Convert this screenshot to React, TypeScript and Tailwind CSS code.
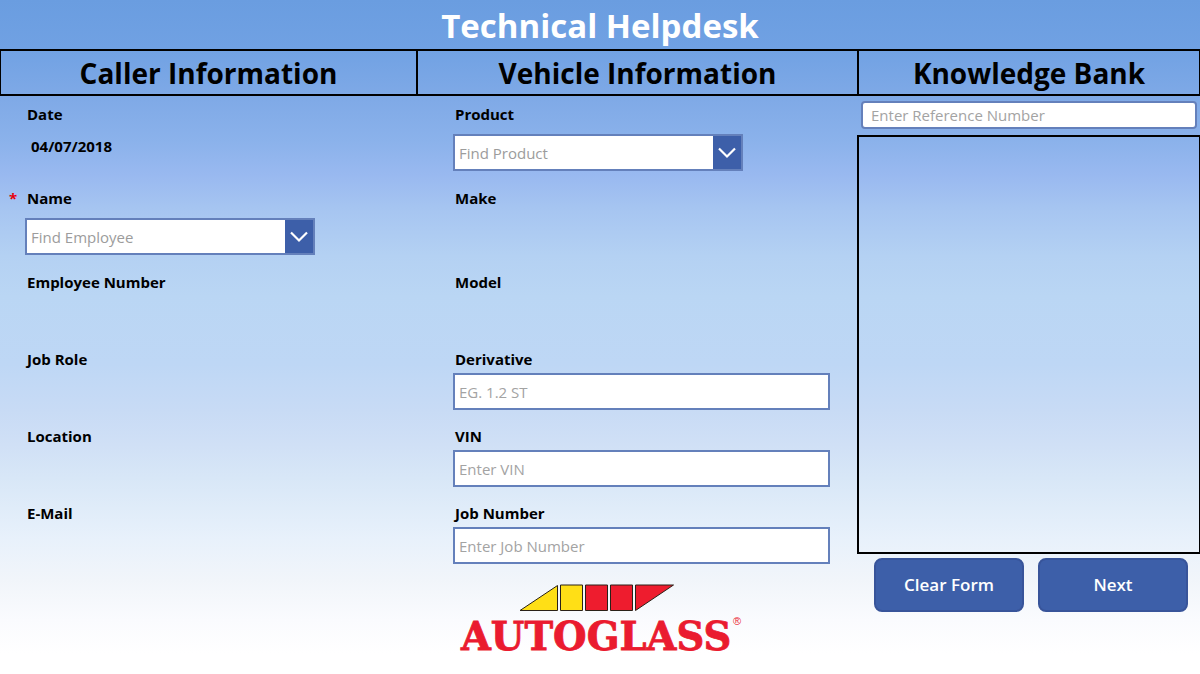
import type { ReactNode } from "react";
import clsx from "clsx";

function Field({ label, htmlFor, required, children }: { label: string; htmlFor?: string; required?: boolean; children?: ReactNode }) {
  const text = "text-[15px] leading-6 font-bold text-black";
  return (
    <div>
      <div className="flex">
        <span className="w-[18px] shrink-0 text-[15px] leading-6 font-bold text-red-600" aria-hidden="true">
          {required ? "*" : ""}
        </span>
        {htmlFor ? (
          <label htmlFor={htmlFor} className={text}>{label}</label>
        ) : (
          <span className={text}>{label}</span>
        )}
      </div>
      {children}
    </div>
  );
}

function Picker({ id, placeholder }: { id: string; placeholder: string }) {
  return (
    <div className="relative mt-2 ml-4 flex h-[37px] w-[290px] border-2 border-[#6480bb] bg-white">
      <select
        id={id}
        defaultValue=""
        className="min-w-0 flex-1 appearance-none rounded-none bg-white pt-px pr-8 pl-1 text-[15px] text-[#9c9c9c] outline-none"
      >
        <option value="">{placeholder}</option>
      </select>
      <span className="pointer-events-none absolute inset-y-0 right-0 flex w-7 items-center justify-center bg-[#3d5fa9]">
        <svg viewBox="0 0 20 12" className="h-3 w-5" fill="none" stroke="#ffffff" strokeWidth="2.2" aria-hidden="true">
          <path d="M2 1.5 L10 9.5 L18 1.5" />
        </svg>
      </span>
    </div>
  );
}

function TextBox({ id, placeholder }: { id: string; placeholder: string }) {
  return (
    <div className="mt-0.5 mr-[27px] ml-4 flex">
      <input
        id={id}
        type="text"
        placeholder={placeholder}
        className="h-[37px] w-full border-2 border-[#6480bb] bg-white px-1 text-[15px] text-black outline-none placeholder:text-[#a3a3a3]"
      />
    </div>
  );
}

function Heading({ children, className }: { children: ReactNode; className: string }) {
  return (
    <h2 className={clsx("border-y-2 border-black pt-0.5 text-center text-[28px] leading-[41px] font-bold text-black", className)}>
      {children}
    </h2>
  );
}

function Logo() {
  return (
    <svg viewBox="-4 0 292 80" className="h-[80px] w-[292px]" role="img" aria-label="Autoglass">
      <g stroke="#2a2118" strokeWidth="1">
        <path d="M59 26.500 L96.500 1.500 V26.500 Z" fill="#ffdf16" />
        <path d="M99.500 1 H121.500 V26.500 H99.500 Z" fill="#ffdf16" />
        <path d="M124.500 1 H146.500 V26.500 H124.500 Z" fill="#ee1c2e" />
        <path d="M149.500 1 H171.500 V26.500 H149.500 Z" fill="#ee1c2e" />
        <path d="M174.500 1 H212.500 L174.500 26.500 Z" fill="#ee1c2e" />
      </g>
      <text
        x="0"
        y="65.500"
        fill="#ea1b2f"
        stroke="#ea1b2f"
        strokeWidth="0.8"
        fontFamily="'DejaVu Serif', serif"
        fontWeight="700"
        fontSize="38.5"
      >
        AUTOGLASS
      </text>
      <text x="272" y="41" fill="#ea1b2f" fontFamily="'Liberation Sans', sans-serif" fontSize="11">®</text>
    </svg>
  );
}

const columns = "grid grid-cols-[416fr_441fr_343fr]";
const rows = "grid content-start grid-rows-[84px_84px_77px_77px_77px_auto] pt-1.5";
const button =
  "h-[54px] flex-1 rounded-lg border-2 border-[#38549a] bg-[#3d5fa9] text-[17px] font-semibold text-white";

export default function App() {
  return (
    <main className="flex min-h-screen flex-col bg-[linear-gradient(to_bottom,#6a9de0_0%,#70a1e3_7%,#80aae7_15%,#8bb2eb_21%,#99b9f0_26%,#a6c5f1_31%,#b4d1f3_38%,#bad6f4_44%,#bed7f5_54%,#c8dbf5_61%,#d0e0f6_66%,#d8e7f7_71%,#e8f1fb_80%,#f1f5fa_86%,#fafbfe_92%,#ffffff_97%)] font-['Open_Sans',sans-serif]">
      <h1 className="h-[49px] pt-0.5 text-center text-[33px] leading-[47px] font-bold text-white">Technical Helpdesk</h1>

      <div className={columns}>
        <Heading className="border-l">Caller Information</Heading>
        <Heading className="border-l-2">Vehicle Information</Heading>
        <Heading className="border-x-2 border-r">Knowledge Bank</Heading>
      </div>

      <form className={clsx(columns, "flex-1")} onSubmit={(e) => e.preventDefault()}>
        <section className={clsx(rows, "pl-[9px]")}>
          <Field label="Date">
            <p className="mt-2 ml-[22px] text-[15px] leading-6 font-bold text-black">04/07/2018</p>
          </Field>
          <Field label="Name" htmlFor="name" required>
            <Picker id="name" placeholder="Find Employee" />
          </Field>
          <Field label="Employee Number" />
          <Field label="Job Role" />
          <Field label="Location" />
          <Field label="E-Mail" />
        </section>

        <section className={clsx(rows, "pl-[21px]")}>
          <Field label="Product" htmlFor="product">
            <Picker id="product" placeholder="Find Product" />
          </Field>
          <Field label="Make" />
          <Field label="Model" />
          <Field label="Derivative" htmlFor="derivative">
            <TextBox id="derivative" placeholder="EG. 1.2 ST" />
          </Field>
          <Field label="VIN" htmlFor="vin">
            <TextBox id="vin" placeholder="Enter VIN" />
          </Field>
          <div>
            <Field label="Job Number" htmlFor="job-number">
              <TextBox id="job-number" placeholder="Enter Job Number" />
            </Field>
            <div className="mt-5 ml-5">
              <Logo />
            </div>
          </div>
        </section>

        <section className="flex flex-col">
          <div className="flex pt-[5px] pr-[3px] pb-1.5 pl-1">
            <input
              type="text"
              aria-label="Reference number"
              placeholder="Enter Reference Number"
              className="h-7 w-full rounded border-2 border-[#6480bb] bg-white px-2 text-[15px] text-black outline-none placeholder:text-[#a3a3a3]"
            />
          </div>
          <div className="h-[419px] border-2 border-r border-black" />
          <div className="flex gap-3.5 pt-1 pr-3 pl-[17px]">
            <button type="reset" className={button}>Clear Form</button>
            <button type="submit" className={button}>Next</button>
          </div>
        </section>
      </form>
    </main>
  );
}
